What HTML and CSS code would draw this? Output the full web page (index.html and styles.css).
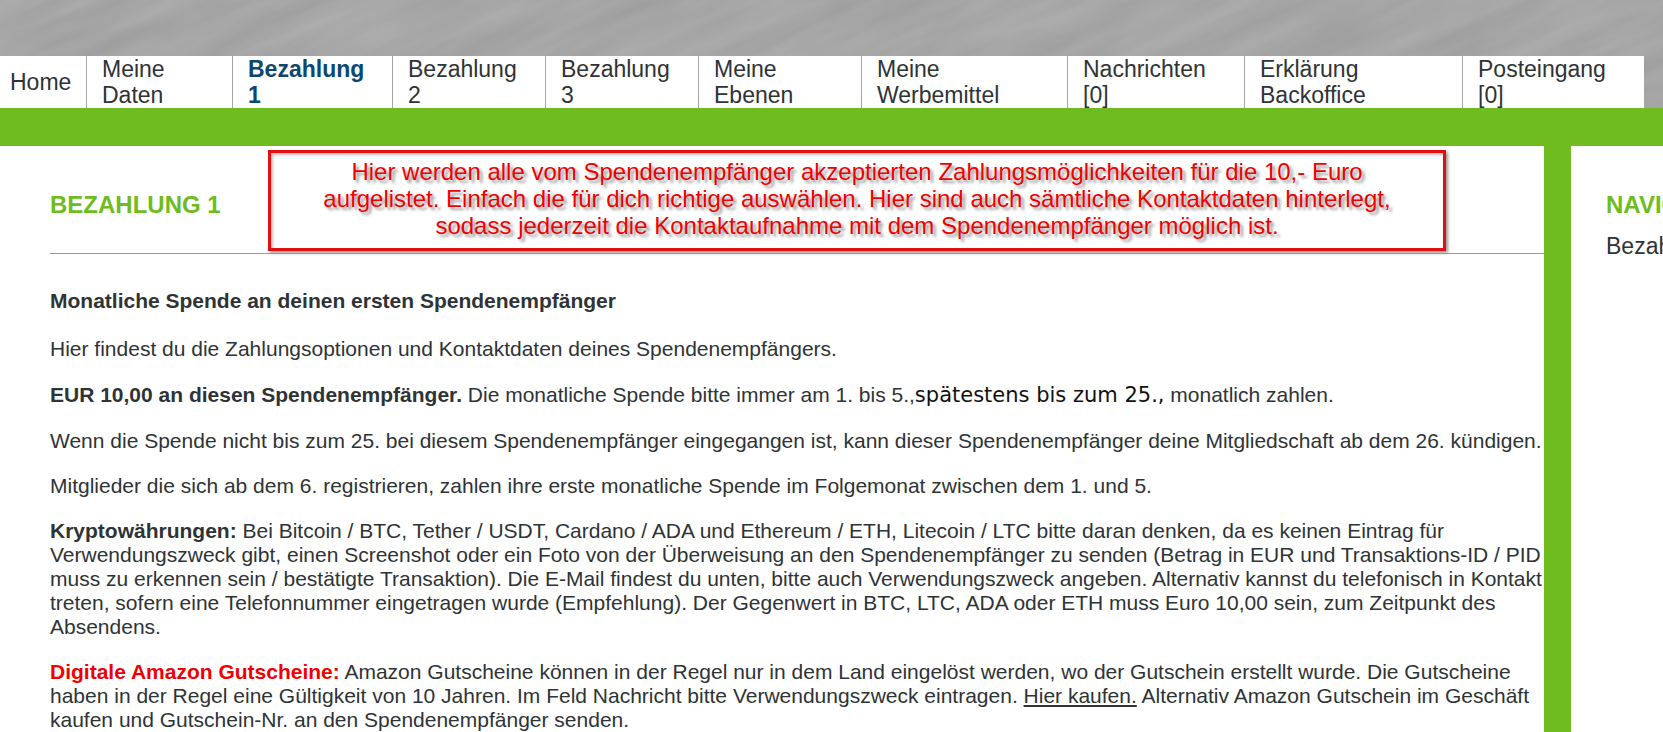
FILE: index.html
```html
<!DOCTYPE html>
<html lang="de">
  <head>
    <meta charset="utf-8">
    <title>Bezahlung 1</title>
    <link rel="stylesheet" href="styles.css">
  </head>
  <body>
    <div class="header">
      <svg class="texture" aria-hidden="true">
        <filter id="brushed" x="0" y="0" width="100%" height="100%" color-interpolation-filters="sRGB">
          <feTurbulence type="fractalNoise" baseFrequency="0.008 0.05" numOctaves="3" seed="4"/>
          <feColorMatrix values="0.08 0 0 0 0.61  0.08 0 0 0 0.61  0.08 0 0 0 0.61  0 0 0 0 1"/>
        </filter>
        <g transform="rotate(-24)">
          <rect x="-200" y="-100" width="2000" height="1000" filter="url(#brushed)"/>
        </g>
      </svg>
      <ul class="nav">
        <li class="home"><a href="#">Home</a></li>
        <li><a href="#">Meine Daten</a></li>
        <li class="active"><a href="#">Bezahlung 1</a></li>
        <li><a href="#">Bezahlung 2</a></li>
        <li><a href="#">Bezahlung 3</a></li>
        <li><a href="#">Meine Ebenen</a></li>
        <li><a href="#">Meine Werbemittel</a></li>
        <li><a href="#">Nachrichten [0]</a></li>
        <li><a href="#">Erklärung Backoffice</a></li>
        <li><a href="#">Posteingang [0]</a></li>
      </ul>
    </div>

    <div class="container">
      <div class="content">
        <h1>Bezahlung 1</h1>
        <div class="hint">Hier werden alle vom Spendenempfänger akzeptierten Zahlungsmöglichkeiten für die 10,- Euro<br>
          aufgelistet. Einfach die für dich richtige auswählen. Hier sind auch sämtliche Kontaktdaten hinterlegt,<br>
          sodass jederzeit die Kontaktaufnahme mit dem Spendenempfänger möglich ist.</div>

        <h2>Monatliche Spende an deinen ersten Spendenempfänger</h2>
        <p>Hier findest du die Zahlungsoptionen und Kontaktdaten deines Spendenempfängers.</p>
        <p><b>EUR 10,00 an diesen Spendenempfänger.</b> Die monatliche Spende bitte immer am 1. bis 5.,<span class="deadline">spätestens bis zum 25.,</span> monatlich zahlen.</p>
        <p>Wenn die Spende nicht bis zum 25. bei diesem Spendenempfänger eingegangen ist, kann dieser Spendenempfänger deine Mitgliedschaft ab dem 26. kündigen.</p>
        <p>Mitglieder die sich ab dem 6. registrieren, zahlen ihre erste monatliche Spende im Folgemonat zwischen dem 1. und 5.</p>
        <p><b>Kryptowährungen:</b> Bei Bitcoin / BTC, Tether / USDT, Cardano / ADA und Ethereum / ETH, Litecoin / LTC bitte daran denken, da es keinen Eintrag für Verwendungszweck gibt, einen Screenshot oder ein Foto von der Überweisung an den Spendenempfänger zu senden (Betrag in EUR und Transaktions-ID / PID muss zu erkennen sein / bestätigte Transaktion). Die E-Mail findest du unten, bitte auch Verwendungszweck angeben. Alternativ kannst du telefonisch in Kontakt treten, sofern eine Telefonnummer eingetragen wurde (Empfehlung). Der Gegenwert in BTC, LTC, ADA oder ETH muss Euro 10,00 sein, zum Zeitpunkt des Absendens.</p>
        <p><b class="red">Digitale Amazon Gutscheine:</b> Amazon Gutscheine können in der Regel nur in dem Land eingelöst werden, wo der Gutschein erstellt wurde. Die Gutscheine haben in der Regel eine Gültigkeit von 10 Jahren. Im Feld Nachricht bitte Verwendungszweck eintragen. <a href="#">Hier kaufen.</a> Alternativ Amazon Gutschein im Geschäft kaufen und Gutschein-Nr. an den Spendenempfänger senden.</p>
      </div>

      <div class="sidebar">
        <h3>Navigation</h3>
        <a href="#">Bezahlung 1</a>
      </div>
    </div>
  </body>
</html>
```

FILE: styles.css
```css
* {
  box-sizing: border-box;
}
body {
  margin: 0;
  font-family: "Liberation Sans", Arial, sans-serif;
  font-size: 21px;
  line-height: 24px;
  color: #2e3336;
  background-color: #fff;
  overflow-x: hidden;
}
a {
  color: inherit;
}

/* Header and navigation */
.header {
  position: relative;
  padding: 56px 19px 0 0;
  background-color: #a6a6a6;
}
.texture {
  position: absolute;
  top: 0;
  left: 0;
  width: 100%;
  height: 100%;
}
.nav {
  position: relative;
  display: grid;
  grid-template-columns: 87fr 146fr 160fr 153fr 153fr 163fr 206fr 177fr 218fr 181fr;
  margin: 0;
  padding: 0;
  list-style: none;
  background-color: #fff;
  font-size: 23px;
  line-height: 26px;
}
.nav li {
  display: flex;
  align-items: center;
  padding: 0 24px 0 15px;
  border-right: 1px solid #a6a6a6;
}
.nav .home {
  padding: 0 0 0 10px;
}
.nav li:last-child {
  border-right: 0;
}
.nav a {
  text-decoration: none;
}
.nav .active {
  font-weight: bold;
  color: #0b4770;
}

/* Page */
.container {
  display: grid;
  grid-template-columns: 1fr 92px;
  column-gap: 27px;
  min-height: calc(100vh - 108px);
  border-top: 38px solid #6fbc20;
  background-color: #6fbc20;
}
.content {
  position: relative;
  padding-left: 50px;
  background-color: #fff;
}
h1, h3 {
  margin: 0;
  font-size: 24px;
  line-height: 28px;
  color: #6fbc20;
  text-transform: uppercase;
}
h1 {
  padding: 45px 0 34px;
  border-bottom: 1px solid #999;
}
h2 {
  margin: 35px 0 24px;
  font-size: 21px;
  line-height: 24px;
}
p {
  margin: 0 0 21px;
}
p:last-child {
  margin: 0;
}
.red {
  color: #f00000;
}
.deadline {
  font-family: "DejaVu Sans", Verdana, sans-serif;
  line-height: 26px;
  color: #111;
}

/* Hint box over the heading */
.hint {
  position: absolute;
  top: 4px;
  left: 268px;
  right: 98px;
  padding: 5px 0 9px;
  border: 3px solid #e01010;
  background-color: #fff;
  box-shadow: 2px 2px 3px #999, inset 2px 2px 3px #bbb;
  color: #f00000;
  font-size: 24px;
  line-height: 27px;
  text-align: center;
  text-shadow: 3px 3px 3px #999;
}

.sidebar {
  padding: 45px 0 0 35px;
  background-color: #fff;
  font-size: 23px;
  white-space: nowrap;
  overflow: hidden;
}
.sidebar h3 {
  margin-bottom: 15px;
}
.sidebar a {
  text-decoration: none;
}
```
